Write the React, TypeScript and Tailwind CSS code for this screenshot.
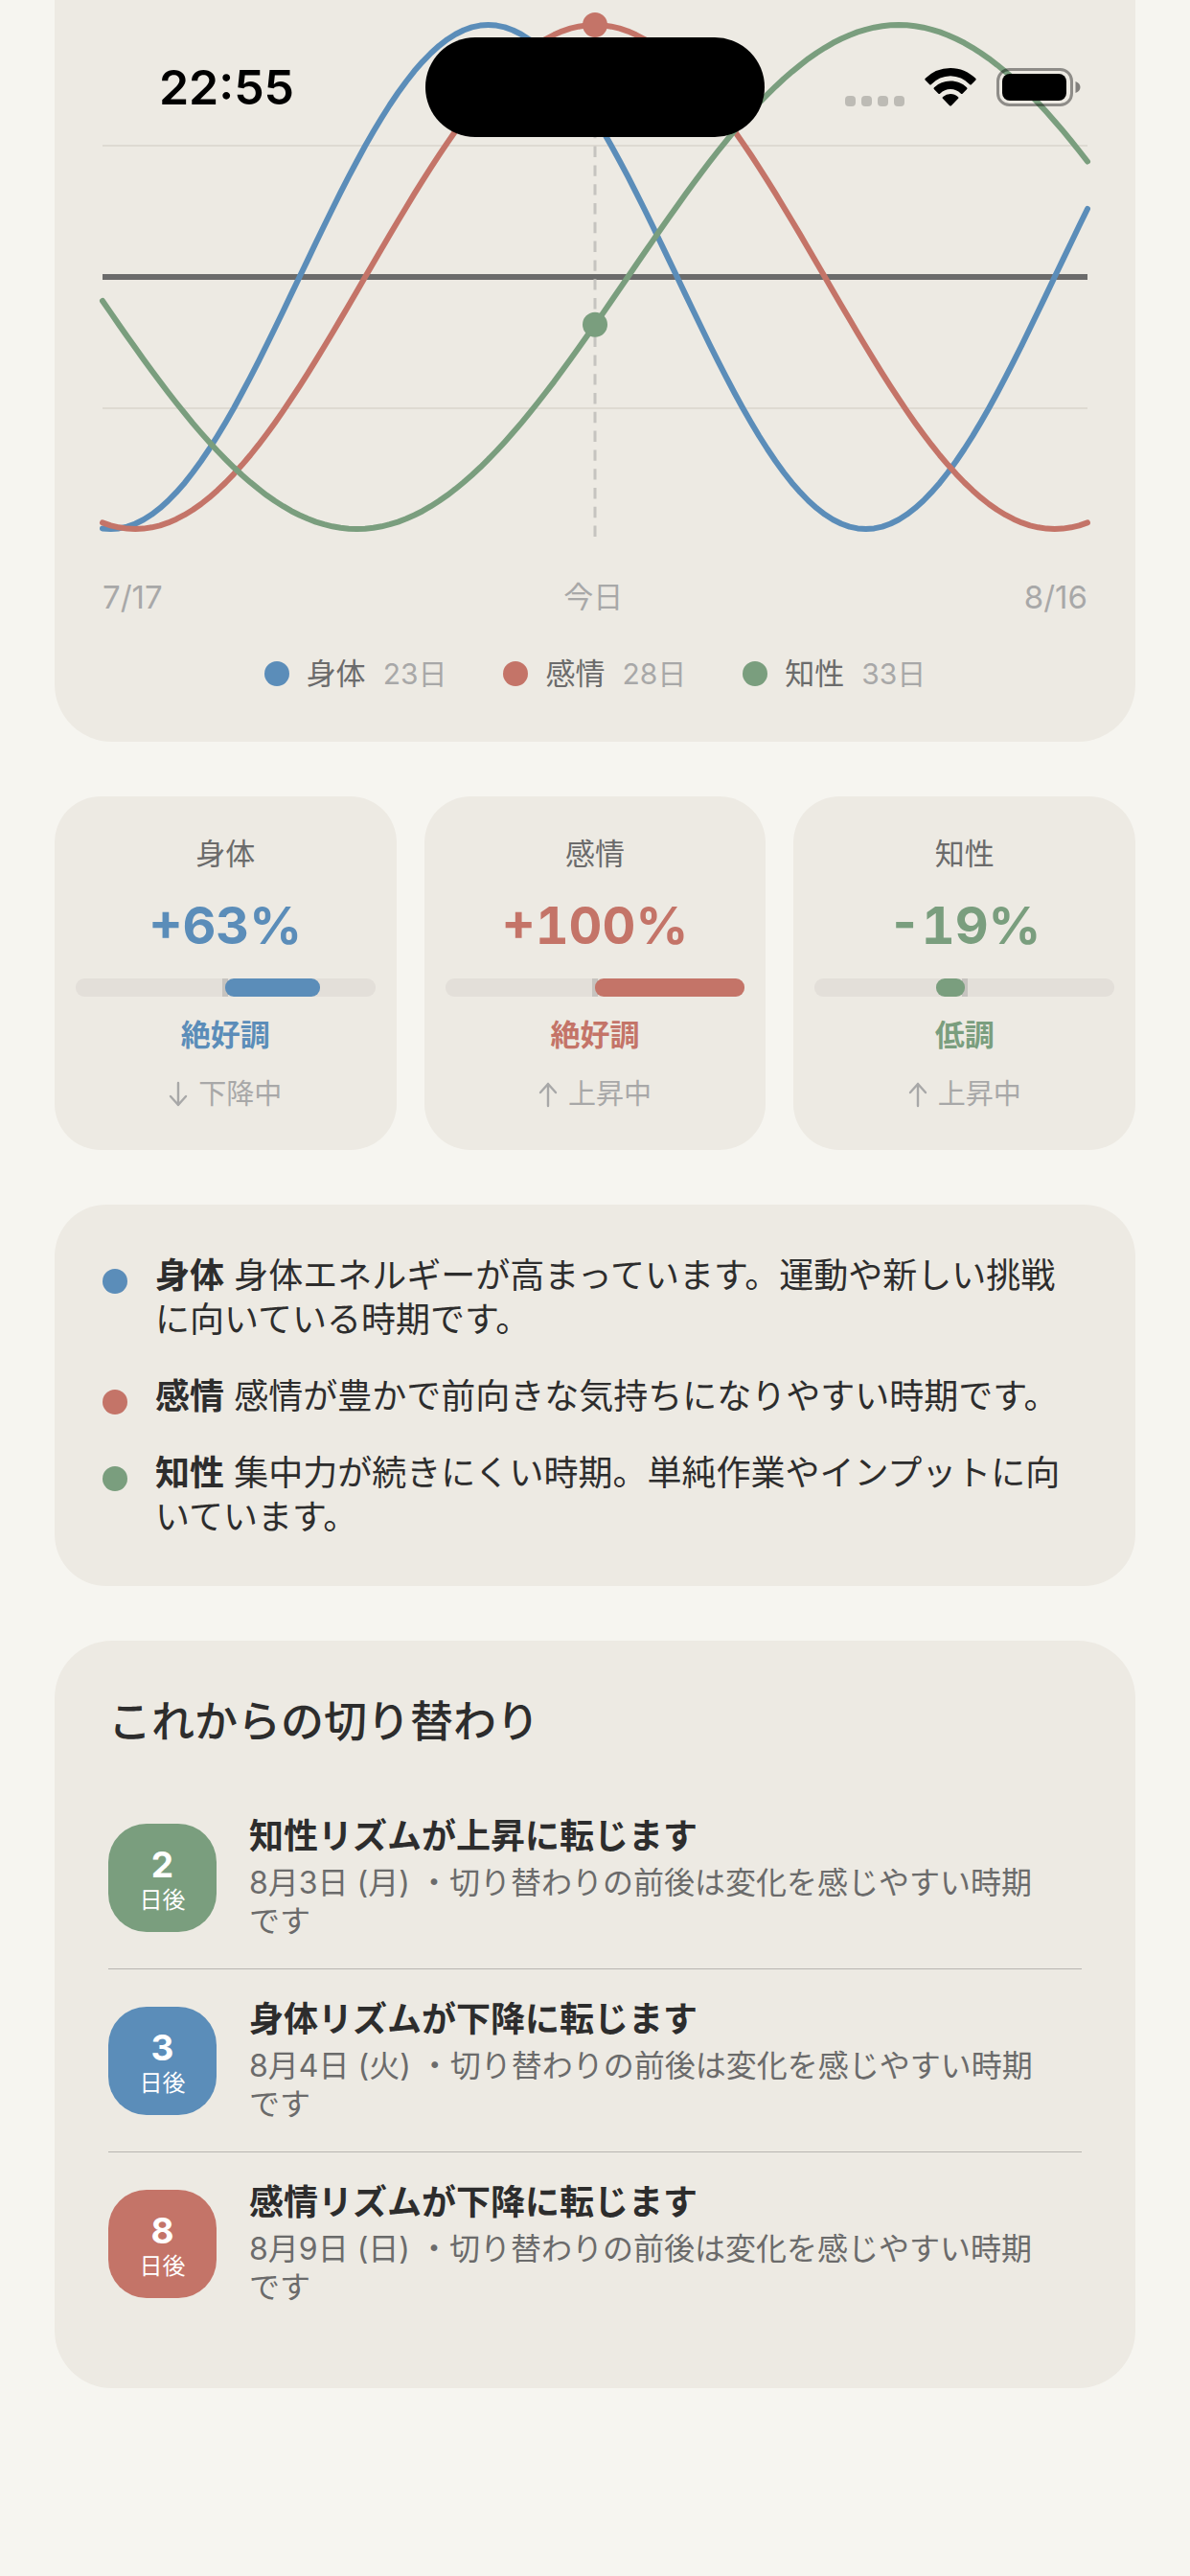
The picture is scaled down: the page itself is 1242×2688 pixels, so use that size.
import { useMemo } from "react";

type RhythmKey = "body" | "emotion" | "intellect";

const RHYTHMS: {
  key: RhythmKey;
  name: string;
  period: number;
  day: number;
  percent: number;
  status: string;
  rising: boolean;
  advice: string;
}[] = [
  {
    key: "body",
    name: "身体",
    period: 23,
    day: 9,
    percent: 63,
    status: "絶好調",
    rising: false,
    advice: "身体エネルギーが高まっています。運動や新しい挑戦に向いている時期です。",
  },
  {
    key: "emotion",
    name: "感情",
    period: 28,
    day: 7,
    percent: 100,
    status: "絶好調",
    rising: true,
    advice: "感情が豊かで前向きな気持ちになりやすい時期です。",
  },
  {
    key: "intellect",
    name: "知性",
    period: 33,
    day: 32,
    percent: -19,
    status: "低調",
    rising: true,
    advice: "集中力が続きにくい時期。単純作業やインプットに向いています。",
  },
];

const UPCOMING: { key: RhythmKey; days: number; title: string; date: string }[] = [
  { key: "intellect", days: 2, title: "知性リズムが上昇に転じます", date: "8月3日 (月)" },
  { key: "body", days: 3, title: "身体リズムが下降に転じます", date: "8月4日 (火)" },
  { key: "emotion", days: 8, title: "感情リズムが下降に転じます", date: "8月9日 (日)" },
];

const BG = { body: "bg-[#5b8db9]", emotion: "bg-[#c47468]", intellect: "bg-[#7a9e7e]" };
const TEXT = { body: "text-[#5b8db9]", emotion: "text-[#c47468]", intellect: "text-[#7a9e7e]" };
const STROKE = { body: "stroke-[#5b8db9]", emotion: "stroke-[#c47468]", intellect: "stroke-[#7a9e7e]" };
const FILL = { body: "fill-[#5b8db9]", emotion: "fill-[#c47468]", intellect: "fill-[#7a9e7e]" };

const CHART = { width: 1028, height: 573, mid: 289, amplitude: 263, range: 15 };

function chartY(period: number, day: number) {
  return CHART.mid - CHART.amplitude * Math.sin((2 * Math.PI * day) / period);
}

export default function App() {
  return (
    <div className="relative min-h-screen bg-[#f6f5f0] font-['Inter','Noto_Sans_CJK_JP',sans-serif] text-[#2d2d2d]">
      <StatusBar />
      <main className="flex flex-col gap-[57px] px-[57px] pb-48">
        <section className="rounded-b-[60px] bg-[#edeae3] px-[50px] pb-[51px]">
          <RhythmChart />
          <div className="mt-[30px] flex justify-between text-[33px] leading-[40px] text-[#a8a8a8]">
            <span>7/17</span>
            <span className="text-[31px]">今日</span>
            <span>8/16</span>
          </div>
          <ul className="mt-10 flex justify-center gap-[59px] leading-[40px]">
            {RHYTHMS.map((r) => (
              <li key={r.key} className="flex items-center gap-[18px]">
                <span className={`size-[26px] rounded-full ${BG[r.key]}`} />
                <span className="text-[31px] text-[#6b6b6b]">{r.name}</span>
                <span className="text-[30px] text-[#a8a8a8]">{`${r.period}日`}</span>
              </li>
            ))}
          </ul>
        </section>

        <section className="grid grid-cols-3 gap-[29px]">
          {RHYTHMS.map((r) => (
            <div key={r.key} className="flex flex-col items-center rounded-[48px] bg-[#edeae3] px-[22px] pt-10 pb-[38px]">
              <h3 className="text-[31px] leading-[40px] text-[#6b6b6b]">{r.name}</h3>
              <p className={`mt-[22px] text-[54px] leading-[66px] font-bold tabular-nums ${TEXT[r.key]}`}>
                {`${r.percent > 0 ? "+" : ""}${r.percent}%`}
              </p>
              <Meter value={r.percent} color={BG[r.key]} />
              <p className={`mt-5 text-[31px] leading-[40px] font-semibold ${TEXT[r.key]}`}>{r.status}</p>
              <p className="mt-[22px] flex items-center gap-[11px] text-[29px] leading-[40px] text-[#a8a8a8]">
                <TrendArrow rising={r.rising} />
                {r.rising ? "上昇中" : "下降中"}
              </p>
            </div>
          ))}
        </section>

        <section className="rounded-[54px] bg-[#edeae3] px-[50px] pt-[51px] pb-[49px]">
          <ul className="flex flex-col gap-[34px]">
            {RHYTHMS.map((r) => (
              <li key={r.key} className="flex gap-[29px]">
                <span className={`mt-4 size-[26px] shrink-0 rounded-full ${BG[r.key]}`} />
                <p className="text-[36px] leading-[46px]">
                  <strong className="font-bold">{r.name}</strong> {r.advice}
                </p>
              </li>
            ))}
          </ul>
        </section>

        <section className="rounded-[60px] bg-[#edeae3] p-14">
          <h2 className="text-[45px] leading-[58px] font-medium">これからの切り替わり</h2>
          <ul className="mt-[38px] divide-y divide-[#b7b5b0]">
            {UPCOMING.map((u) => (
              <li key={u.key} className="flex items-center gap-[34px] py-[29px]">
                <div
                  className={`flex size-[113px] shrink-0 flex-col items-center justify-center rounded-[40px] pt-2 text-white ${BG[u.key]}`}
                >
                  <span className="text-[37px] leading-[40px] font-bold">{u.days}</span>
                  <span className="text-[24px] leading-[34px]">日後</span>
                </div>
                <div className="pr-10">
                  <h3 className="text-[36px] leading-[46px] font-semibold">{u.title}</h3>
                  <p className="mt-[6px] text-[32px] leading-[40px] text-[#6b6b6b]">
                    {`${u.date} ・切り替わりの前後は変化を感じやすい時期です`}
                  </p>
                </div>
              </li>
            ))}
          </ul>
        </section>
      </main>
    </div>
  );
}

function RhythmChart() {
  const { width, height, mid, range } = CHART;

  const curves = useMemo(
    () =>
      RHYTHMS.map((r) => {
        const points: string[] = [];
        for (let t = -range; t <= range; t += 0.25) {
          const x = ((t + range) / (range * 2)) * width;
          points.push(`${x.toFixed(1)},${chartY(r.period, r.day + t).toFixed(1)}`);
        }
        return { key: r.key, points: points.join(" "), today: chartY(r.period, r.day) };
      }),
    [width, range],
  );

  return (
    <svg viewBox={`0 0 ${width} ${height}`} className="block w-full overflow-visible" role="img" aria-label="バイオリズム">
      <line x1="0" x2={width} y1="152" y2="152" strokeWidth="2" className="stroke-[#dedad2]" />
      <line x1="0" x2={width} y1="426" y2="426" strokeWidth="2" className="stroke-[#dedad2]" />
      <line x1="0" x2={width} y1={mid} y2={mid} strokeWidth="6" className="stroke-[#6b6b6b]" />
      <line
        x1={width / 2}
        x2={width / 2}
        y1="14"
        y2="561"
        strokeWidth="3"
        strokeDasharray="11.4 8.4"
        className="stroke-[#c6c4c0]"
      />
      {curves.map((c) => (
        <polyline
          key={c.key}
          points={c.points}
          fill="none"
          strokeWidth="6"
          strokeLinecap="round"
          strokeLinejoin="round"
          className={STROKE[c.key]}
        />
      ))}
      {curves.map((c) => (
        <circle key={c.key} cx={width / 2} cy={c.today} r="13" className={FILL[c.key]} />
      ))}
    </svg>
  );
}

function Meter({ value, color }: { value: number; color: string }) {
  const size = Math.abs(value) / 2;
  return (
    <div className="relative mt-[22px] h-[19px] w-full rounded-[9px] bg-[#e3dfd9]">
      <div className="absolute inset-y-0 left-1/2 w-[6px] -translate-x-1/2 bg-[#c6c3bf]" />
      <div
        className={`absolute inset-y-0 rounded-[9px] ${color}`}
        style={{ left: `${value < 0 ? 50 - size : 50}%`, width: `${size}%` }}
      />
    </div>
  );
}

function TrendArrow({ rising }: { rising: boolean }) {
  return (
    <svg
      viewBox="0 0 20 28"
      className={`h-7 w-5 fill-none stroke-current ${rising ? "" : "rotate-180"}`}
      strokeWidth="2.4"
      strokeLinecap="round"
      strokeLinejoin="round"
      aria-hidden="true"
    >
      <path d="M10 26V3M2 12l8-9 8 9" />
    </svg>
  );
}

function StatusBar() {
  return (
    <header className="absolute inset-x-0 top-0 z-10 grid grid-cols-[1fr_354px_1fr] items-center pt-[39px] text-black">
      <time className="pl-[29px] text-center text-[50px] leading-[104px] font-semibold">22:55</time>
      <div className="h-[104px] rounded-full bg-black" />
      <div className="flex items-center justify-end gap-[21px] pr-[114px]">
        <svg viewBox="0 0 62 40" className="h-10 w-[62px] fill-black/20" aria-hidden="true">
          <rect x="0" y="29" width="11" height="11" rx="4" />
          <rect x="17" y="29" width="11" height="11" rx="4" />
          <rect x="34" y="29" width="11" height="11" rx="4" />
          <rect x="51" y="29" width="11" height="11" rx="4" />
        </svg>
        <svg viewBox="0 0 54 40" className="h-10 w-[54px] fill-black" aria-hidden="true">
          <path d="M27 0C37 0 46.300 4 53.200 10.800a1.400 1.400 0 0 1 0 2L49 17a1.400 1.400 0 0 1-2 0A28.500 28.500 0 0 0 27 8.200 28.500 28.500 0 0 0 7 17a1.400 1.400 0 0 1-2 0L.8 12.800a1.400 1.400 0 0 1 0-2A37.300 37.300 0 0 1 27 0Z" />
          <path d="M27 13.600c6.600 0 12.500 2.500 17 6.600a1.400 1.400 0 0 1 0 2.100L39.800 26.500a1.500 1.500 0 0 1-2.100 0A16 16 0 0 0 27 22a16 16 0 0 0-10.700 4.500 1.500 1.500 0 0 1-2.100 0L10 22.300a1.400 1.400 0 0 1 0-2.100 25 25 0 0 1 17-6.600Z" />
          <path d="M27 27c3 0 5.700 1.100 7.800 2.900a1.400 1.400 0 0 1 .1 2.100l-6.800 7a1.500 1.500 0 0 1-2.200 0l-6.800-7a1.400 1.400 0 0 1 .1-2.100A12 12 0 0 1 27 27Z" />
        </svg>
        <svg viewBox="0 0 88 40" className="h-10 w-[88px]" aria-hidden="true">
          <rect x="1.500" y="1.500" width="77" height="37" rx="12" fill="none" strokeWidth="3" className="stroke-black/40" />
          <rect x="6" y="6" width="67" height="28" rx="8" className="fill-black" />
          <path d="M82.500 14c3 1 5 3.300 5 6s-2 5-5 6Z" className="fill-black/45" />
        </svg>
      </div>
    </header>
  );
}
